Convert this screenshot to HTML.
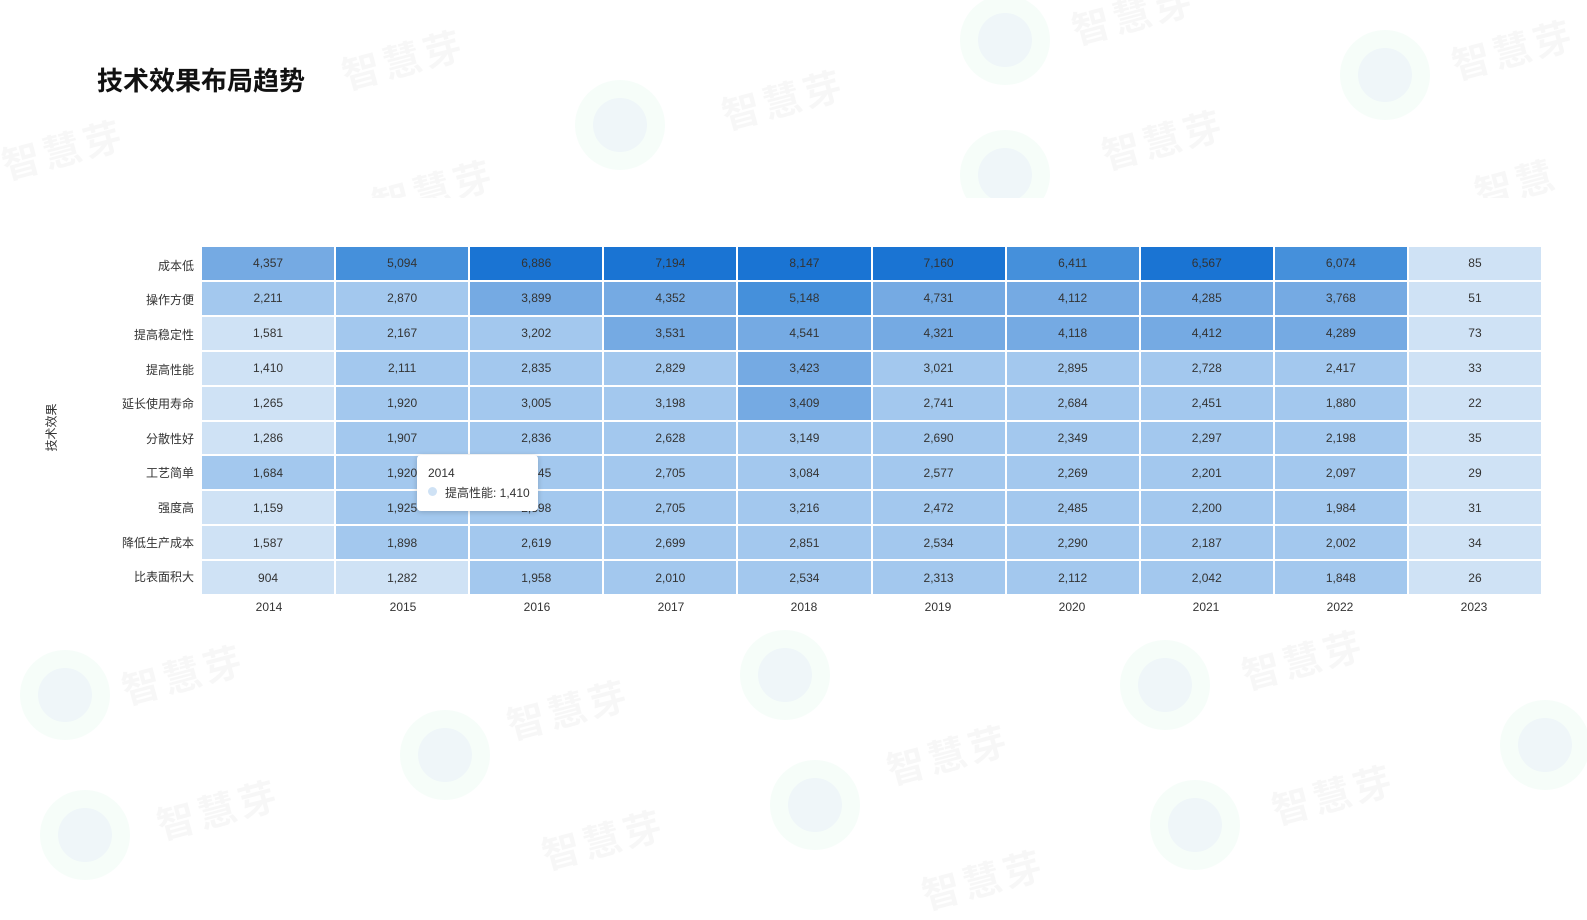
<!DOCTYPE html>
<html><head><meta charset="utf-8"><style>
body{margin:0;width:1587px;height:892px;background:#fff;position:relative;overflow:hidden;font-family:"Liberation Sans","Noto Sans CJK SC",sans-serif;}
.wm{position:absolute;color:rgba(0,0,0,0.03);font-size:38px;transform:rotate(-15deg);font-weight:bold;letter-spacing:4px}
.blob{position:absolute;width:90px;height:90px;border-radius:50%;background:rgba(150,230,190,0.09)}
.blob::after{content:"";position:absolute;left:18px;top:18px;width:54px;height:54px;border-radius:50%;background:rgba(180,190,255,0.1)}
.chartbg{position:absolute;left:0;top:198px;width:1587px;height:435px;background:#fff}
h1{position:absolute;left:97px;top:61px;margin:0;font-size:26px;font-weight:bold;color:#111}
.grid{position:absolute;left:202px;top:247px;width:1339px;height:347px;display:grid;grid-template-columns:repeat(10,1fr);grid-template-rows:repeat(10,1fr);gap:2px;background:#fff}
.grid div{display:flex;align-items:center;justify-content:center;font-size:12px;color:#333}
.a{background:#1a74d3}.b{background:#4590db}.c{background:#75aae3}.d{background:#a3c8ee}.e{background:#cfe2f5}
.yl{position:absolute;right:1393px;font-size:12px;color:#333;text-align:right;white-space:nowrap}
.xl{position:absolute;top:600px;font-size:12px;color:#333;width:134px;text-align:center}
.tip{position:absolute;left:417px;top:455px;width:121px;height:56px;background:#fff;border-radius:4px;box-shadow:0 1px 6px rgba(0,0,0,0.2);font-size:12px;color:#333}
</style></head><body>
<div class="blob" style="left:575px;top:80px"></div><div class="wm" style="left:720px;top:70px">智慧芽</div>
<div class="blob" style="left:960px;top:-5px"></div><div class="wm" style="left:1070px;top:-15px">智慧芽</div>
<div class="blob" style="left:1340px;top:30px"></div><div class="wm" style="left:1450px;top:20px">智慧芽</div>
<div class="wm" style="left:340px;top:30px">智慧芽</div><div class="wm" style="left:0px;top:120px">智慧芽</div>
<div class="blob" style="left:960px;top:130px"></div><div class="wm" style="left:1100px;top:110px">智慧芽</div>
<div class="wm" style="left:1480px;top:150px">智慧芽</div><div class="wm" style="left:370px;top:160px">智慧芽</div>
<div class="chartbg"></div>
<div class="blob" style="left:20px;top:650px"></div><div class="wm" style="left:120px;top:645px">智慧芽</div>
<div class="blob" style="left:400px;top:710px"></div><div class="wm" style="left:505px;top:680px">智慧芽</div>
<div class="blob" style="left:740px;top:630px"></div><div class="wm" style="left:885px;top:725px">智慧芽</div>
<div class="blob" style="left:1120px;top:640px"></div><div class="wm" style="left:1240px;top:630px">智慧芽</div>
<div class="blob" style="left:40px;top:790px"></div><div class="wm" style="left:155px;top:780px">智慧芽</div>
<div class="blob" style="left:770px;top:760px"></div><div class="wm" style="left:540px;top:810px">智慧芽</div>
<div class="blob" style="left:1150px;top:780px"></div><div class="wm" style="left:1270px;top:765px">智慧芽</div>
<div class="blob" style="left:1500px;top:700px"></div><div class="wm" style="left:920px;top:850px">智慧芽</div>
<h1>技术效果布局趋势</h1>
<div style="position:absolute;left:26px;top:419px;width:50px;text-align:center;font-size:12px;color:#333;transform:rotate(-90deg)">技术效果</div>
<div class="yl" style="top:257px">成本低</div><div class="yl" style="top:291px">操作方便</div><div class="yl" style="top:326px">提高稳定性</div><div class="yl" style="top:361px">提高性能</div><div class="yl" style="top:395px">延长使用寿命</div><div class="yl" style="top:430px">分散性好</div><div class="yl" style="top:464px">工艺简单</div><div class="yl" style="top:499px">强度高</div><div class="yl" style="top:534px">降低生产成本</div><div class="yl" style="top:568px">比表面积大</div>
<div class="grid">
<div class="c">4,357</div><div class="b">5,094</div><div class="a">6,886</div><div class="a">7,194</div><div class="a">8,147</div><div class="a">7,160</div><div class="b">6,411</div><div class="a">6,567</div><div class="b">6,074</div><div class="e">85</div>
<div class="d">2,211</div><div class="d">2,870</div><div class="c">3,899</div><div class="c">4,352</div><div class="b">5,148</div><div class="c">4,731</div><div class="c">4,112</div><div class="c">4,285</div><div class="c">3,768</div><div class="e">51</div>
<div class="e">1,581</div><div class="d">2,167</div><div class="d">3,202</div><div class="c">3,531</div><div class="c">4,541</div><div class="c">4,321</div><div class="c">4,118</div><div class="c">4,412</div><div class="c">4,289</div><div class="e">73</div>
<div class="e">1,410</div><div class="d">2,111</div><div class="d">2,835</div><div class="d">2,829</div><div class="c">3,423</div><div class="d">3,021</div><div class="d">2,895</div><div class="d">2,728</div><div class="d">2,417</div><div class="e">33</div>
<div class="e">1,265</div><div class="d">1,920</div><div class="d">3,005</div><div class="d">3,198</div><div class="c">3,409</div><div class="d">2,741</div><div class="d">2,684</div><div class="d">2,451</div><div class="d">1,880</div><div class="e">22</div>
<div class="e">1,286</div><div class="d">1,907</div><div class="d">2,836</div><div class="d">2,628</div><div class="d">3,149</div><div class="d">2,690</div><div class="d">2,349</div><div class="d">2,297</div><div class="d">2,198</div><div class="e">35</div>
<div class="d">1,684</div><div class="d">1,920</div><div class="d">2,845</div><div class="d">2,705</div><div class="d">3,084</div><div class="d">2,577</div><div class="d">2,269</div><div class="d">2,201</div><div class="d">2,097</div><div class="e">29</div>
<div class="e">1,159</div><div class="d">1,925</div><div class="d">2,898</div><div class="d">2,705</div><div class="d">3,216</div><div class="d">2,472</div><div class="d">2,485</div><div class="d">2,200</div><div class="d">1,984</div><div class="e">31</div>
<div class="e">1,587</div><div class="d">1,898</div><div class="d">2,619</div><div class="d">2,699</div><div class="d">2,851</div><div class="d">2,534</div><div class="d">2,290</div><div class="d">2,187</div><div class="d">2,002</div><div class="e">34</div>
<div class="e">904</div><div class="e">1,282</div><div class="d">1,958</div><div class="d">2,010</div><div class="d">2,534</div><div class="d">2,313</div><div class="d">2,112</div><div class="d">2,042</div><div class="d">1,848</div><div class="e">26</div>
</div>
<div class="xl" style="left:202px">2014</div><div class="xl" style="left:336px">2015</div><div class="xl" style="left:470px">2016</div><div class="xl" style="left:604px">2017</div><div class="xl" style="left:737px">2018</div><div class="xl" style="left:871px">2019</div><div class="xl" style="left:1005px">2020</div><div class="xl" style="left:1139px">2021</div><div class="xl" style="left:1273px">2022</div><div class="xl" style="left:1407px">2023</div>
<div class="tip"><div style="position:absolute;left:11px;top:11px">2014</div><div style="position:absolute;left:11px;top:32px;width:9px;height:9px;border-radius:50%;background:#cfe2f5"></div><div style="position:absolute;left:28px;top:29px;white-space:nowrap">提高性能: 1,410</div></div>
</body></html>
